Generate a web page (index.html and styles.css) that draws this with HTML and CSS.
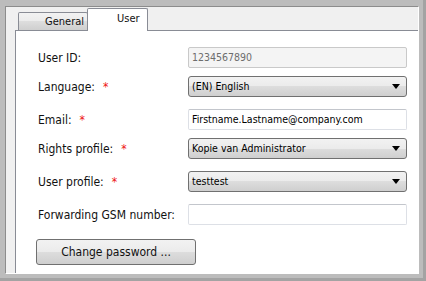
FILE: index.html
```html
<!DOCTYPE html>
<html>
<head>
<meta charset="utf-8">
<link rel="stylesheet" href="styles.css">
</head>
<body>
<div class="screen">
  <div class="window">
    <div class="inner">
      <div class="tabs">
        <div class="tab tab-general">General</div>
        <div class="tab tab-active">User</div>
      </div>
      <div class="panel">
        <div class="form">
          <div class="row">
            <div class="label">User ID:</div>
            <div class="input input-disabled">1234567890</div>
          </div>
          <div class="row row-sel">
            <div class="label">Language:<span class="req">*</span></div>
            <div class="select"><span>(EN) English</span><span class="arrow"></span></div>
          </div>
          <div class="row">
            <div class="label">Email:<span class="req">*</span></div>
            <div class="input">Firstname.Lastname@company.com</div>
          </div>
          <div class="row row-sel">
            <div class="label">Rights profile:<span class="req">*</span></div>
            <div class="select"><span>Kopie van Administrator</span><span class="arrow"></span></div>
          </div>
          <div class="row row-sel">
            <div class="label">User profile:<span class="req">*</span></div>
            <div class="select"><span>testtest</span><span class="arrow"></span></div>
          </div>
          <div class="row">
            <div class="label">Forwarding GSM number:</div>
            <div class="input"></div>
          </div>
        </div>
        <div class="button">Change password ...</div>
      </div>
    </div>
  </div>
</div>
</body>
</html>
```

FILE: styles.css
```css
html, body {
  margin: 0;
  padding: 0;
}
body {
  width: 426px;
  height: 281px;
  overflow: hidden;
  font-family: "DejaVu Sans Condensed", "DejaVu Sans", sans-serif;
  font-stretch: condensed;
}
.screen {
  width: 426px;
  height: 281px;
  background: #a3a3a3;
  box-sizing: border-box;
  padding: 0 3px 3px 0;
}
.window {
  width: 423px;
  height: 278px;
  box-sizing: border-box;
  background: #bcbcbc;
  padding: 6px 4px 4px 5px;
}
.inner {
  height: 100%;
  box-sizing: border-box;
  background: #f0f0f0;
  border-top: 1px solid #8c8c8c;
  border-left: 1px solid #8c8c8c;
  border-right: 1px solid #ffffff;
  border-bottom: 1px solid #ffffff;
  padding-left: 9px;
  display: flex;
  flex-direction: column;
}
.tabs {
  height: 23px;
  display: flex;
  align-items: flex-end;
  padding-left: 3px;
  font-size: 11px;
  color: #111;
}
.tab {
  box-sizing: border-box;
  border: 1px solid #898c95;
  border-bottom: none;
  border-radius: 2px 2px 0 0;
  white-space: nowrap;
  overflow: hidden;
}
.tab-general {
  width: 70px;
  height: 18px;
  padding-left: 26px;
  line-height: 18px;
  background: linear-gradient(#f2f2f2, #ebebeb 50%, #dddddd 50%, #cfcfcf);
}
.tab-active {
  width: 61px;
  height: 23px;
  margin-left: -1px;
  margin-bottom: -1px;
  padding-left: 29px;
  line-height: 19px;
  background: #ffffff;
  position: relative;
}
.panel {
  flex: 1;
  background: #ffffff;
  border-top: 1px solid #898c95;
  border-left: 1px solid #898c95;
  padding: 16px 10px 0 20px;
}
.form {
  display: flex;
  flex-direction: column;
  gap: 8px;
}
.row {
  display: grid;
  grid-template-columns: 152px 219px;
  height: 21px;
  align-items: center;
}
.row-sel {
  margin-bottom: 4px;
}
.label {
  padding-left: 2px;
  font-size: 12px;
  color: #111;
}
.req {
  color: #ee1111;
  margin-left: 8px;
}
.input {
  box-sizing: border-box;
  height: 21px;
  border: 1px solid #dde0e6;
  border-top-color: #c3c6cc;
  border-radius: 2px;
  font-size: 10.5px;
  line-height: 19px;
  padding-left: 3px;
  color: #000;
}
.input-disabled {
  background: #f4f4f4;
  border-color: #c9c9c9;
  color: #6d6d6d;
}
.select {
  box-sizing: border-box;
  height: 21px;
  border: 1px solid #707070;
  border-radius: 3px;
  background: linear-gradient(#f2f2f2, #ebebeb 50%, #dddddd 50%, #cfcfcf);
  font-size: 10.5px;
  line-height: 19px;
  padding: 0 6px 0 3px;
  display: flex;
  justify-content: space-between;
  align-items: center;
  color: #000;
}
.arrow {
  width: 0;
  height: 0;
  border-left: 4px solid transparent;
  border-right: 4px solid transparent;
  border-top: 5px solid #000;
}
.button {
  box-sizing: border-box;
  width: 160px;
  height: 26px;
  margin: 14px 0 0 0;
  border: 1px solid #707070;
  border-radius: 3px;
  background: linear-gradient(#f2f2f2, #ebebeb 50%, #dddddd 50%, #cfcfcf);
  font-size: 12px;
  line-height: 24px;
  text-align: center;
  color: #111;
}
```
